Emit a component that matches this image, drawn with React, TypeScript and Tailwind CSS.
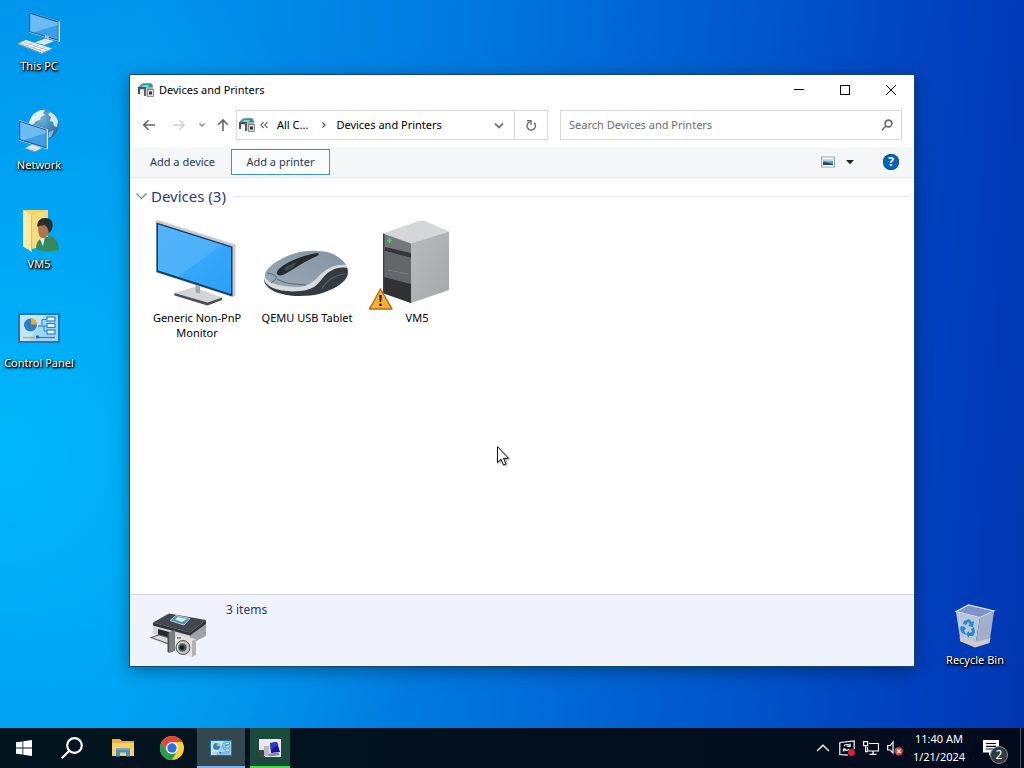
import type { ReactNode } from "react";

function ThisPcIcon() {
  return (
    <svg viewBox="0 0 48 48" className="h-12 w-12" aria-hidden="true">
      <path d="M14 3 45 12.5V33L14 23.5Z" fill="#d5e2ec" />
      <path d="M14 3 43.5 12.2V32L14 23Z" fill="#2b5f8f" />
      <path d="M15.3 5 42.7 13.5V30.5L15.3 22.2Z" fill="#3d9fea" />
      <path d="M15.3 5 42.7 13.5V16L19 23.3 15.3 22.2Z" fill="#6cbcf4" />
      <path d="M20 33.5 30 29.5 39 32 29.5 36Z" fill="#dfe4e8" />
      <path d="M30 28.5V26l4 1.2V31Z" fill="#aebbc6" />
      <path d="M3 34.5 11 31 37 39.5 27 44Z" fill="#eef2f5" />
      <path d="M3 34.5 27 44v1.2L3 35.8ZM27 44l10-4.5v1L27 45.2Z" fill="#7f9bb4" />
      <path d="M6 34.8 29.5 42.8M9 33.3 33 41.2M12 36.5l6-3M18 38.8l6-3M24 41l6-3" stroke="#a9b9c7" strokeWidth="0.8" />
    </svg>
  );
}

function NetworkIcon() {
  return (
    <svg viewBox="0 0 48 48" className="h-12 w-12" aria-hidden="true">
      <defs>
        <radialGradient id="globe" cx="0.4" cy="0.3" r="0.75">
          <stop offset="0" stopColor="#6fb3d8" />
          <stop offset="0.6" stopColor="#3f88b6" />
          <stop offset="1" stopColor="#2a6690" />
        </radialGradient>
      </defs>
      <circle cx="29" cy="16.5" r="14.8" fill="url(#globe)" />
      <path d="M17 8c4-5 9-6.500 13-6l-2 3 2 2-4 2-1 3-4 1-2 3-4 1-1-3Z" fill="#dff0f7" />
      <path d="M35 4c4 2 7 5 8 9l-1 6-3-1-1-4-3-1 1-4-3-2Z" fill="#cde7f2" />
      <path d="M34 24l5-2-3 7-3 1Z" fill="#7db9d4" />
      <path d="M4 12 33 21.5V41.5L4 32.5Z" fill="#d5e2ec" />
      <path d="M4 12.5 31.5 21.5V40.5L4 32Z" fill="#2b5f8f" />
      <path d="M5.3 14.3 30.7 22.6V39L5.3 31Z" fill="#3d9fea" />
      <path d="M5.3 14.3 30.7 22.6V25L9 32.200 5.3 31Z" fill="#6cbcf4" />
      <path d="M10 40 17 36.5 27 40 20 43.5Z" fill="#dfe4e8" />
      <path d="M10 40 20 43.5 27 40v1L20 44.500 10 41Z" fill="#7f9bb4" />
    </svg>
  );
}

function UserFolderIcon() {
  return (
    <svg viewBox="0 0 48 48" className="h-12 w-12" aria-hidden="true">
      <path d="M8 3H33V38H16Z" fill="#f5d36c" />
      <path d="M8 3 17 8V45L8 39.5Z" fill="#ffe9a6" />
      <path d="M17 8 33 3V38L17 42Z" fill="#f8da80" />
      <path d="M17 8V45l-1-1V7.500Z" fill="#e2bd62" />
      <path d="M21 42c0-6 2-9 6-11l9-2c5 2 8 8 8 14-8 2-17 2-23-1Z" fill="#348a5c" />
      <path d="M25 32l5-2-2 9Z" fill="#e8f2ee" />
      <path d="M23 19c0-4 3-6 7-6s7 3 6 8c-1 6-5 11-9 10-3-1-4-5-4-12Z" fill="#a97852" />
      <path d="M22.5 20c-1-6 3-9.500 8.500-9 5 0 7.500 4 6.500 9-1 4-2 5-4 6 0-4-1-6-4-8-2 1-5 0-7 2Z" fill="#2d2d2f" />
    </svg>
  );
}

function ControlPanelIcon({ className = "h-12 w-12", viewBox = "0 0 48 48" }: { className?: string; viewBox?: string }) {
  return (
    <svg viewBox={viewBox} className={className} aria-hidden="true">
      <rect x="3" y="7" width="42" height="30" fill="#1f78b4" />
      <rect x="5" y="9" width="38" height="26" fill="#9fd8f7" />
      <path d="M5 9H30L14 35H5Z" fill="#bfe6fb" />
      <circle cx="15.5" cy="19" r="6.5" fill="#2b7fc2" />
      <path d="M16 18.500V12A6.500 6.500 0 0 1 22 18.500Z" fill="#f6a62b" />
      <path d="M23 20h4V13.5h4M27 20h4M31 25h-2v-5" fill="none" stroke="#2b7fc2" strokeWidth="1" />
      <g fill="#e6f6ff" stroke="#1f86d0" strokeWidth="1.2">
        <rect x="32" y="11" width="8" height="4" />
        <rect x="32" y="17.5" width="8" height="4" />
        <rect x="32" y="24" width="8" height="4" />
      </g>
      <path d="M8 31.5h12" stroke="#f09a2a" strokeWidth="1.4" />
      <path d="M24 31.5h16" stroke="#2b7fc2" strokeWidth="1.2" />
      <circle cx="22.5" cy="31" r="1.8" fill="#1f6fb0" />
    </svg>
  );
}

function RecycleBinIcon() {
  return (
    <svg viewBox="0 2 48 48" className="h-12 w-12" aria-hidden="true">
      <path d="M5 10.5 17.5 4 43 10 29 16.5Z" fill="#7f93c6" stroke="#e3e9f2" strokeWidth="1.2" />
      <path d="M5 11 29 16.500 24 46 9.500 40Z" fill="#bcc6da" />
      <path d="M29 16.5 43 10.5 38.5 41.5 24 46Z" fill="#a3afca" />
      <path d="M8.500 36 25 41l14.500-4-1 5L24 46.500 9.500 40.500Z" fill="#cfcbca" />
      <g fill="#2387d6">
        <path d="M13 20l5-2 3 3 2-1-1 6-5-1 2-2-2-2-2 3-3-1Z" />
        <path d="M10 25l4 1 1 2-2 1 2 5-4-2-2-4Z" />
        <path d="M23 26l1 5-2 4-4 0v2l-3-4 3-3v2l3-1-1-3Z" />
      </g>
    </svg>
  );
}

function PrinterCameraIcon() {
  return (
    <svg viewBox="0 0 60 50" className="h-[50px] w-[60px]" aria-hidden="true">
      <path d="M5 13 42 23V33L5 24Z" fill="#d4d6d8" />
      <path d="M42 23 58 14V26L42 34Z" fill="#9fa3a7" />
      <path d="M5 12.5 21 3.5 58 10 42 22.5Z" fill="#42474e" />
      <path d="M5 12.5 42 22.500 58 10v4L42 25.500 5 15.500Z" fill="#30343a" />
      <path d="M22 10.500 28 5.500 42 8.500 36 15Z" fill="#4f8fb8" stroke="#b9cfdd" strokeWidth="1" />
      <path d="M27 9.500 30 7l9 2-5 3Z" fill="#d4f0e4" />
      <path d="M10 19 25 23V29L10 25Z" fill="#23262a" />
      <path d="M3 27.5 11 25 28 30 21 34Z" fill="#d7d9db" stroke="#63676b" strokeWidth="1.2" />
      <path d="M21 22 27 20V41L21 43Z" fill="#7b7f83" />
      <path d="M21 22V43L19.5 41.5V23Z" fill="#45494d" />
      <path d="M27 29 31 25.5 48 29V45L44 47 27 43Z" fill="#e4e3e0" />
      <path d="M44 31 48 29V45L44 47Z" fill="#b3b3b1" />
      <path d="M29 28h4" stroke="#70716f" strokeWidth="1.5" />
      <circle cx="35" cy="37.5" r="7" fill="#b6b6b4" stroke="#5b5d60" strokeWidth="1" />
      <circle cx="34.5" cy="37.5" r="4.8" fill="#50555b" stroke="#f2f2f0" strokeWidth="1" />
      <circle cx="34" cy="37.5" r="2.3" fill="#1a1e24" />
    </svg>
  );
}

function DevicesSmallIcon() {
  return (
    <svg viewBox="0 0 16 16" className="h-4 w-4 shrink-0" aria-hidden="true">
      <path d="M1 4 4 1.500H14L15 4V6H1Z" fill="#7d8a90" />
      <path d="M5 1.500h8L14 5H4Z" fill="#1c9c93" />
      <path d="M5 3h6l-1 2H4Z" fill="#7fd6d0" />
      <path d="M0 5h15v4H0Z" fill="#a9b0b5" />
      <path d="M0 5h8v2H2v5H0Z" fill="#4a545d" />
      <path d="M2.500 7.500h3V10h-3Z" fill="#f2f8fa" />
      <path d="M6 6h2v8H6Z" fill="#59646d" />
      <path d="M8 6h1v8H8Z" fill="#c9ced2" />
      <rect x="9.500" y="7.500" width="6" height="7" fill="#dcdcda" stroke="#74777a" strokeWidth="0.8" />
      <rect x="11" y="9.500" width="3" height="3" fill="#33393f" />
    </svg>
  );
}

function MonitorImage() {
  return (
    <svg viewBox="0 0 96 96" className="h-24 w-24" aria-hidden="true">
      <defs>
        <linearGradient id="screen" x1="0" y1="0" x2="1" y2="1">
          <stop offset="0" stopColor="#45affb" />
          <stop offset="1" stopColor="#2ba0f8" />
        </linearGradient>
      </defs>
      <path d="M25.5 79 45 73 73 83.5 58.5 88.5Z" fill="#d3d6d9" />
      <path d="M25.5 79 58.5 88.500 73 83.500V86L58.500 91.500 25.500 81.500Z" fill="#4a4f54" />
      <path d="M46.5 70h4.500v9.500l-4.500-1Z" fill="#a1a6ab" />
      <path d="M7 7 9 6 86.5 30.5V81.5L83 83 7 58.5Z" fill="#c7cbcf" />
      <path d="M7.5 8.500 83.500 32.500V82.500L7.500 58Z" fill="#163d5e" />
      <path d="M9 10.500 82 33.600V80L9 56.300Z" fill="url(#screen)" />
      <path d="M9 10.500 73 30.700 29 62.700 9 56.300Z" fill="#5fbbfc" opacity="0.5" />
    </svg>
  );
}

function MouseImage() {
  return (
    <svg viewBox="0 0 96 96" className="h-24 w-24" aria-hidden="true">
      <defs>
        <linearGradient id="mouseTop" x1="0" y1="1" x2="1" y2="0">
          <stop offset="0" stopColor="#9ba8b4" />
          <stop offset="1" stopColor="#8293a3" />
        </linearGradient>
      </defs>
      <path d="M5 66C6 75 20 82 40 82 57 82 64 79 71 76 80 72 89 66 89 58 89 50 80 44 74 42L10 60Z" fill="#353b42" />
      <path d="M5 64C5 73 22 79 41 77 54 76 58 71 63 65 69 57 78 52 88 54 87 49 80 43 74 41L10 58Z" fill="#d8dcdf" />
      <path d="M6 62C6 52 24 43 37 39 48 36 64 36 74 40 80 43 85 47 87 51 76 50 67 55 60 62 54 68 49 73 38 73 22 73 7 69 6 62Z" fill="url(#mouseTop)" />
      <path d="M8 59C16 60 18 62 17 65M18 65C26 70 36 70 47 71M17 65 12 69" fill="none" stroke="#5c6771" strokeWidth="1" />
      <path d="M18 58C21 51 40 42 58 39 61 39 60 42 56 43 44 48 34 56 24 61 20 62 17 61 18 58Z" fill="#252a30" />
      <path d="M25 55C29 51 35 49 38 48L34 53 27 57Z" fill="#434c55" />
      <path d="M63 75C66 68 75 61 86 60" fill="none" stroke="#596069" strokeWidth="1.2" />
    </svg>
  );
}

function ServerImage() {
  return (
    <svg viewBox="0 0 96 96" className="h-24 w-24" aria-hidden="true">
      <defs>
        <linearGradient id="serverSide" x1="0" y1="0" x2="1" y2="1">
          <stop offset="0" stopColor="#b9babc" />
          <stop offset="1" stopColor="#a6a8aa" />
        </linearGradient>
      </defs>
      <path d="M14 19.5 48 7.500Q53 6 57 7.500L80 17.500 42 30Z" fill="#d5d6d8" />
      <path d="M42 29.5 80 17.5V76L42 89Z" fill="url(#serverSide)" />
      <path d="M14 19.5 42 29.5V89L15 79.5Z" fill="#74777b" />
      <path d="M16 33 42 39V44L16 37Z" fill="#34373b" />
      <path d="M16 37 42 44V70L16 63Z" fill="#63666a" />
      <path d="M19 56 39 60" stroke="#7c7f83" strokeWidth="1" />
      <path d="M15 63 42 70V89L15 79.5Z" fill="#303236" />
      <path d="M14 19.5 15.500 20V80L14 79.500Z" fill="#3d4045" />
      <path d="M20.500 24v5M18 26.500h5" stroke="#37e065" strokeWidth="1.600" />
      <path d="M11.5 75 23 95H.5Z" fill="#fbb034" stroke="#b26a12" strokeWidth="1.4" strokeLinejoin="round" />
      <path d="M10.2 81h2.600l-.6 7h-1.400ZM10.400 89.800h2.200v2.200h-2.200Z" fill="#1b1b1b" />
    </svg>
  );
}

function DesktopShortcut({ label, children }: { label: string; children: ReactNode }) {
  return (
    <button type="button" className="flex w-[78px] flex-col items-center text-[11px] leading-[18px] text-white">
      {children}
      <span className="whitespace-nowrap [text-shadow:1px_1px_2px_#000,1px_1px_1px_#000,0_1px_3px_#000]">{label}</span>
    </button>
  );
}

const shortcuts = [
  { label: "This PC", icon: <ThisPcIcon /> },
  { label: "Network", icon: <NetworkIcon /> },
  { label: "VM5", icon: <UserFolderIcon /> },
  { label: "Control Panel", icon: <ControlPanelIcon /> },
];

const devices = [
  { label: "Generic Non-PnP Monitor", image: <MonitorImage /> },
  { label: "QEMU USB Tablet", image: <MouseImage /> },
  { label: "VM5", image: <ServerImage /> },
];

function TitleBar() {
  return (
    <header className="flex h-[30px] items-center pl-2">
      <DevicesSmallIcon />
      <h1 className="ml-[5px] flex-1 text-[11px]">Devices and Printers</h1>
      <button type="button" aria-label="Minimize" className="flex h-full w-[46px] items-center justify-center">
        <svg viewBox="0 0 10 10" className="h-2.5 w-2.5" shapeRendering="crispEdges">
          <path d="M0 4h10v1H0Z" />
        </svg>
      </button>
      <button type="button" aria-label="Maximize" className="flex h-full w-[46px] items-center justify-center">
        <span className="h-2.5 w-2.5 border border-black" />
      </button>
      <button type="button" aria-label="Close" className="flex h-full w-[46px] items-center justify-center">
        <svg viewBox="0 0 10 10" className="h-2.5 w-2.5" stroke="#000" strokeWidth="1">
          <path d="M0 0 10 10M10 0 0 10" />
        </svg>
      </button>
    </header>
  );
}

function NavigationRow() {
  return (
    <nav className="mb-0.5 flex h-10 items-center px-3 text-[11px]">
      <button type="button" aria-label="Back" className="flex w-[14px] justify-center">
        <svg viewBox="0 0 14 12" className="h-3 w-3.5" fill="none" stroke="#666" strokeWidth="1.6">
          <path d="M13 6H2M6.500 1.200 1.700 6l4.800 4.800" />
        </svg>
      </button>
      <button type="button" aria-label="Forward" disabled className="ml-4 flex w-[14px] justify-center">
        <svg viewBox="0 0 14 12" className="h-3 w-3.5" fill="none" stroke="#d0d0d0" strokeWidth="1.4">
          <path d="M1 6H12M7.500 1.200 12.300 6l-4.800 4.800" />
        </svg>
      </button>
      <button type="button" aria-label="Recent locations" className="ml-3 flex w-2 justify-center">
        <svg viewBox="0 0 8 8" className="h-2 w-2" fill="none" stroke="#888" strokeWidth="1.4">
          <path d="M1.500 2.500 4 5l2.500-2.500" />
        </svg>
      </button>
      <button type="button" aria-label="Up" className="ml-[11px] flex w-3 justify-center">
        <svg viewBox="0 0 12 14" className="h-3.5 w-3" fill="none" stroke="#666" strokeWidth="1.6">
          <path d="M6 13V2M1.200 6.800 6 2l4.800 4.800" />
        </svg>
      </button>
      <div className="ml-[7px] flex h-[30px] min-w-0 flex-1 items-center border border-[#d9d9d9] pl-0.5">
        <DevicesSmallIcon />
        <svg viewBox="0 0 8 8" className="ml-[5px] h-2 w-2" fill="none" stroke="#555" strokeWidth="1.1">
          <path d="M3.700 1 1 4l2.700 3M7.500 1 4.800 4l2.700 3" />
        </svg>
        <a href="#" className="ml-[9px] text-black">All C...</a>
        <svg viewBox="0 0 8 8" className="ml-3 h-2 w-2" fill="none" stroke="#555" strokeWidth="1.2">
          <path d="M2.500 1.500 5 4 2.500 6.500" />
        </svg>
        <a href="#" className="ml-2 flex-1 truncate text-black">Devices and Printers</a>
        <button type="button" aria-label="Previous locations" className="flex h-full w-[31px] items-center justify-center">
          <svg viewBox="0 0 10 10" className="h-2.5 w-2.5" fill="none" stroke="#777" strokeWidth="1.8">
            <path d="M1 3.500 5 7.500l4-4" />
          </svg>
        </button>
        <button type="button" aria-label="Refresh" className="flex h-full w-[33px] items-center justify-center border-l border-[#d9d9d9]">
          <svg viewBox="0 0 12 12" className="h-3 w-3" fill="none" stroke="#707070" strokeWidth="1.5">
            <path d="M9.200 3.800A4.200 4.200 0 1 1 4.500 3" />
            <path d="M2 1.800h4V5.800" />
          </svg>
        </button>
      </div>
      <label className="ml-3 flex h-[30px] w-[342px] items-center border border-[#d9d9d9] px-2">
        <input
          type="text"
          aria-label="Search Devices and Printers"
          placeholder="Search Devices and Printers"
          className="min-w-0 flex-1 outline-none placeholder:text-[#6d6d6d]"
        />
        <svg viewBox="0 0 12 12" className="h-3 w-3" fill="none" stroke="#666" strokeWidth="1.6">
          <circle cx="7.500" cy="4.500" r="3.400" />
          <path d="M5 7 .8 11.200" />
        </svg>
      </label>
    </nav>
  );
}

function Toolbar() {
  return (
    <div className="flex h-[31px] items-center border-b border-[#e8eaec] bg-[#f5f6f7] pr-[15px] pl-1 text-[11px] text-[#1e395b]">
      <button type="button" className="h-[26px] w-[97px]">Add a device</button>
      <button type="button" className="h-[26px] w-[99px] border border-[#3c96bd] bg-[#fafcfd]">Add a printer</button>
      <div className="flex-1" />
      <button type="button" aria-label="Change your view">
        <svg viewBox="0 0 14 12" className="h-3 w-3.5">
          <rect x="0.5" y="1" width="13" height="10" fill="#fff" stroke="#8fa6bb" />
          <rect x="2" y="3" width="10" height="6" fill="#5b93bf" />
          <path d="M2 3h10v2L8 5.500 2 4.500Z" fill="#b9dcf2" />
          <path d="M2 6 7 7l5 1v1H2Z" fill="#23445e" />
        </svg>
      </button>
      <button type="button" aria-label="More view options" className="ml-2.5">
        <svg viewBox="0 0 10 6" className="h-1.5 w-2.5">
          <path d="M1 1h8L5 5.200Z" fill="#222" />
        </svg>
      </button>
      <button
        type="button"
        aria-label="Help"
        className="ml-7 h-4 w-4 rounded-full bg-[#0b62bd] text-[12px] leading-4 font-bold text-white ring-1 ring-[#0a4f9c] ring-inset"
      >
        ?
      </button>
    </div>
  );
}

function DevicesWindow() {
  return (
    <main className="absolute top-[74px] right-[109px] bottom-[101px] left-[129px] flex flex-col border border-[#12456f] bg-white text-black shadow-[0_4px_16px_rgba(0,0,0,0.35)]">
      <TitleBar />
      <NavigationRow />
      <Toolbar />
      <section className="min-h-0 flex-1 pt-[7px]">
        <div className="flex h-[22px] items-center px-1.5">
          <svg viewBox="0 0 11 8" className="h-2 w-[11px]" fill="none" stroke="#7a7a8c" strokeWidth="1.1">
            <path d="M.5 1.500 5.500 6.500l5-5" />
          </svg>
          <h2 className="ml-1 text-[15px] text-[#2b3b7a]">Devices (3)</h2>
          <div className="ml-2 h-px flex-1 bg-[#e2e5ea]" />
        </div>
        <ul className="mt-[7px] flex flex-wrap px-3">
          {devices.map((device) => (
            <li key={device.label} className="w-[110px]">
              <button type="button" className="flex w-full flex-col items-center text-[11px] leading-[15px]">
                {device.image}
                <span className="px-2">{device.label}</span>
              </button>
            </li>
          ))}
        </ul>
      </section>
      <footer className="flex h-[72px] items-start border-t border-[#d3d6dd] bg-[#f0f3fd] pl-[18px]">
        <div className="mt-[15px]">
          <PrinterCameraIcon />
        </div>
        <p className="mt-1.5 ml-[18px] text-[12px] leading-[18px] text-[#2c3a5e]">3 items</p>
      </footer>
    </main>
  );
}

function Taskbar() {
  return (
    <footer className="flex h-10 items-stretch bg-linear-to-r from-[#02151f] to-[#020b1c] text-white">
      <button type="button" aria-label="Start" className="flex w-12 items-center justify-center">
        <svg viewBox="0 0 16 16" className="h-4 w-4" fill="#fff">
          <path d="M0 2.300 6.500 1.400V7.600H0ZM7.300 1.300 16 0V7.600H7.300ZM0 8.400H6.500V14.600L0 13.700ZM7.300 8.400H16V16L7.300 14.700Z" />
        </svg>
      </button>
      <button type="button" aria-label="Search" className="flex w-12 items-center justify-center">
        <svg viewBox="0 0 22 22" className="h-[22px] w-[22px]" fill="none" stroke="#fff" strokeWidth="2.2">
          <circle cx="13.500" cy="8.500" r="7.300" />
          <path d="M8.300 13.700.8 21.200" />
        </svg>
      </button>
      <button type="button" aria-label="File Explorer" className="ml-0.5 flex w-[49px] items-center justify-center">
        <svg viewBox="0 0 22 18" className="h-[18px] w-[22px]">
          <path d="M0 0h8l2 2H22V17H0Z" fill="#e9b13c" />
          <path d="M0 4h22V17H0Z" fill="#f7d06a" />
          <path d="M4 17.500V9.500h14v8h-4V13.500H8v4Z" fill="#4a8fbd" />
          <path d="M4 9.500h14v1.500H4Z" fill="#6aa9cf" />
        </svg>
      </button>
      <button type="button" aria-label="Google Chrome" className="flex w-[49px] items-center justify-center">
        <svg viewBox="0 0 24 24" className="h-6 w-6">
          <circle cx="12" cy="12" r="12" fill="#ffcd3c" />
          <path d="M1.600 6A12 12 0 0 0 12 24L17.200 15 12 12 6.800 15Z" fill="#279b54" />
          <path d="M1.600 6A12 12 0 0 1 22.400 6H12L6.800 15Z" fill="#e2453a" />
          <circle cx="12" cy="12" r="6" fill="#fff" />
          <circle cx="12" cy="12" r="4.700" fill="#2d73e0" />
        </svg>
      </button>
      <button
        type="button"
        aria-label="Devices and Printers"
        className="ml-px flex w-12 items-center justify-center border-b-2 border-[#80b3ea] bg-[#34474f] pt-0.5"
      >
        <ControlPanelIcon className="h-4 w-[22px]" viewBox="3 7 42 30" />
      </button>
      <button
        type="button"
        aria-label="Remote console"
        className="ml-[5px] flex w-10 items-center justify-center border-b-2 border-[#4bdc48] bg-[#1c4a3d] pt-0.5"
      >
        <svg viewBox="0 0 22 18" className="h-[18px] w-[22px]">
          <path d="M0 0h22v18H0Z" fill="#e9e9f2" />
          <path d="M0 11h6v7H0Z" fill="#3f4249" />
          <path d="M5 7h5v10H5Z" fill="#b4b8c0" />
          <path d="M11 4 18 3 21 13 12 14Z" fill="#1414a0" />
          <path d="M11 4 18 3 19 6 12 11Z" fill="#3038c4" />
          <path d="M9 15 19 13.500 21 16 11 17.500Z" fill="#86898f" />
        </svg>
      </button>
      <div className="flex-1" />
      <div className="flex items-center gap-2">
        <button type="button" aria-label="Show hidden icons" className="flex w-4 justify-center">
          <svg viewBox="0 0 14 8" className="h-2 w-3.5" fill="none" stroke="#fff" strokeWidth="1.3">
            <path d="M1 7 7 1.200 13 7" />
          </svg>
        </button>
        <button type="button" aria-label="Updates available">
          <svg viewBox="0 0 16 16" className="h-4 w-4" fill="none" stroke="#fff" strokeWidth="1.2">
            <path d="M.8 2.500 15.200.8V9M.8 2.500v12l8 .7" />
            <path d="M5 6c1-1.800 4-2 5.500-.300M11 3.500V6.500H8M10 9c-1 1.800-4 2-5 .3M4.500 11.500V9H7" />
            <circle cx="12.500" cy="12.500" r="3.400" fill="#e01f32" stroke="none" />
          </svg>
        </button>
        <button type="button" aria-label="Network">
          <svg viewBox="0 0 16 14" className="h-3.5 w-4" fill="none" stroke="#fff" strokeWidth="1.2">
            <path d="M6 2.500h9.500v7.500H4.500V6M10 10v3M6.500 13.400h7" />
            <path d="M.6.600h4v4h-4ZM2.600 4.600v6h2" />
          </svg>
        </button>
        <button type="button" aria-label="Volume muted">
          <svg viewBox="0 0 16 16" className="h-4 w-4" fill="none" stroke="#fff" strokeWidth="1.2">
            <path d="M.7 5.500h2.500L6 2v11L3.200 10H.7Z" />
            <circle cx="11.800" cy="11.200" r="4.200" fill="#d84040" stroke="none" />
            <path d="m10 9.400 3.600 3.600m0-3.600-3.600 3.600" />
          </svg>
        </button>
      </div>
      <button type="button" className="ml-2 flex w-[56px] flex-col items-center pt-[2px] text-[11px] leading-[18px] whitespace-nowrap">
        <span>11:40 AM</span>
        <span>1/21/2024</span>
      </button>
      <button type="button" aria-label="2 new notifications" className="relative ml-[5px] flex w-[48px] items-center justify-center">
        <svg viewBox="0 0 16 16" className="mr-2.5 h-4 w-4">
          <path d="M0 0h16v12.500H9L6 16V12.500H0Z" fill="#fff" />
          <path d="M3 3.500h10M3 6.300h10M3 9h10" stroke="#020b1c" strokeWidth="1.2" />
        </svg>
        <span className="absolute right-3 bottom-1 h-[18px] w-[18px] rounded-full border border-[#8a8f96] bg-[#33383f] text-[12px] leading-4">2</span>
      </button>
      <button type="button" aria-label="Show desktop" className="w-1 border-l border-[#4a5364]" />
    </footer>
  );
}

export default function App() {
  return (
    <div className="flex h-screen flex-col overflow-hidden bg-[#007fe0] font-['Noto_Sans','Open_Sans',sans-serif] select-none">
      <div className="relative min-h-0 flex-1 bg-[radial-gradient(ellipse_45%_70%_at_0%_62%,rgba(0,190,255,0.85),rgba(0,180,255,0)),linear-gradient(94deg,#0090ea_0%,#0094ec_14%,#0078de_45%,#0058cb_70%,#003fbd_90%,#0037b0_100%)]">
        <div className="flex flex-col items-start gap-[33px] pt-[9px]">
          {shortcuts.map((shortcut) => (
            <DesktopShortcut key={shortcut.label} label={shortcut.label}>
              {shortcut.icon}
            </DesktopShortcut>
          ))}
        </div>
        <div className="absolute right-[10px] bottom-[59px]">
          <DesktopShortcut label="Recycle Bin">
            <RecycleBinIcon />
          </DesktopShortcut>
        </div>
        <div className="absolute inset-x-0 top-0 -bottom-10">
          <DevicesWindow />
        </div>
        <svg viewBox="0 0 14 21" className="absolute top-[446px] left-[497px] h-[21px] w-3.5 drop-shadow-[1px_1px_1px_rgba(0,0,0,0.4)]">
          <path d="M.5.700V16.500L4 13.200 6.500 19 9 18 6.500 12.300H11.500Z" fill="#fff" stroke="#111" strokeWidth="1" />
        </svg>
      </div>
      <Taskbar />
    </div>
  );
}
